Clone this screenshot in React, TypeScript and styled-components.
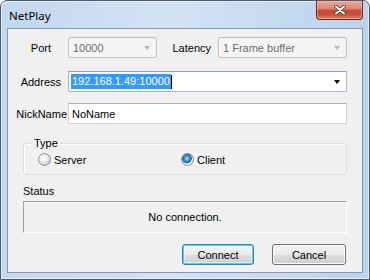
import React from 'react';
import styled, { createGlobalStyle } from 'styled-components';

const GlobalStyle = createGlobalStyle`
  html, body {
    margin: 0;
    padding: 0;
    background: #ffffff;
  }
  * {
    box-sizing: border-box;
  }
`;

const NetPlayDialog: React.FC = () => {
  return (
    <>
      <GlobalStyle />
      <Window>
        <TitleBar>
          <TitleText>NetPlay</TitleText>
          <CloseButton aria-label="Close">
            <svg width="12" height="10" viewBox="0 0 12 10">
              <path d="M2 1.5 L10 8.5 M10 1.5 L2 8.5" stroke="#5a2a22" strokeWidth="3.6" strokeLinecap="round" />
              <path d="M2 1.5 L10 8.5 M10 1.5 L2 8.5" stroke="#ffffff" strokeWidth="2" strokeLinecap="round" />
            </svg>
          </CloseButton>
        </TitleBar>
        <Client>
          <Row>
            <Label pr={17}>Port</Label>
            <Combo disabled w={89}>
              <ComboText disabled>10000</ComboText>
              <Arrow disabled />
            </Combo>
            <Label w={61} pr={7}>Latency</Label>
            <Combo disabled>
              <ComboText disabled>1 Frame buffer</ComboText>
              <Arrow disabled />
            </Combo>
          </Row>
          <Row top={13}>
            <Label pr={7}>Address</Label>
            <Combo>
              <ComboText>
                <Selected>192.168.1.49:10000</Selected>
                <Caret />
              </ComboText>
              <Arrow />
            </Combo>
          </Row>
          <Row top={11}>
            <Label pr={1}>NickName</Label>
            <Edit>NoName</Edit>
          </Row>
          <GroupBox>
            <GroupTitle>Type</GroupTitle>
            <RadioOption w={143}>
              <RadioCircle />
              Server
            </RadioOption>
            <RadioOption>
              <RadioCircle checked />
              Client
            </RadioOption>
          </GroupBox>
          <StatusLabel>Status</StatusLabel>
          <StatusBox>No connection.</StatusBox>
          <ButtonRow>
            <Button primary w={72}>Connect</Button>
            <Button w={74}>Cancel</Button>
          </ButtonRow>
        </Client>
      </Window>
    </>
  );
};

const Window = styled.div`
  width: 370px;
  height: 280px;
  display: flex;
  flex-direction: column;
  padding: 0 6px 6px 6px;
  border: 1px solid #4a5a70;
  border-radius: 7px 7px 0 0;
  background: linear-gradient(90deg, #c3d7ee 0%, #d3e3f4 45%, #bcd3ec 100%);
  box-shadow: inset 1px 1px 0 #e6f0fa, inset -1px -1px 0 #e6f0fa;
`;

const TitleBar = styled.div`
  height: 27px;
  display: flex;
  align-items: flex-start;
  flex-shrink: 0;
`;

const TitleText = styled.div`
  padding: 7px 0 0 2px;
  font-family: "Noto Sans", "Liberation Sans", sans-serif;
  font-size: 11.5px;
  color: #000;
`;

const CloseButton = styled.div`
  margin-left: auto;
  width: 47px;
  height: 19px;
  display: flex;
  align-items: center;
  justify-content: center;
  border: 1px solid #6b2a20;
  border-top: none;
  border-radius: 0 0 4px 4px;
  background: linear-gradient(180deg, #e9a99a 0%, #dc8a78 40%, #c4462f 55%, #c9553e 80%, #dc8a74 100%);
  box-shadow: inset 0 0 0 1px rgba(255, 210, 200, 0.45);
`;

const Client = styled.div`
  flex: 1;
  display: flex;
  flex-direction: column;
  padding: 8px 15px 0 0;
  background: #f0f0f0;
  border: 1px solid #8398b4;
  font-family: "Liberation Sans", Arial, sans-serif;
  font-size: 11px;
  color: #000;
`;

const Row = styled.div<{ top?: number }>`
  display: flex;
  align-items: center;
  height: 21px;
  margin-top: ${p => p.top ?? 0}px;
`;

const Label = styled.div<{ w?: number; pr: number }>`
  width: ${p => p.w ?? 60}px;
  flex-shrink: 0;
  text-align: right;
  padding-right: ${p => p.pr}px;
  white-space: nowrap;
`;

const Combo = styled.div<{ w?: number; disabled?: boolean }>`
  ${p => (p.w ? `width: ${p.w}px; flex-shrink: 0;` : 'flex: 1;')}
  height: 21px;
  display: flex;
  align-items: center;
  padding: 0 2px 0 2px;
  border: 1px solid ${p => (p.disabled ? '#c4c4c4' : '#a9b9cc')};
  border-top-color: ${p => (p.disabled ? '#bababa' : '#8f9fb3')};
  border-radius: ${p => (p.disabled ? '3px' : '1px')};
  background: ${p => (p.disabled ? '#f4f4f4' : '#ffffff')};
`;

const ComboText = styled.div<{ disabled?: boolean }>`
  flex: 1;
  display: flex;
  align-items: center;
  height: 15px;
  padding-left: ${p => (p.disabled ? 2 : 0)}px;
  color: ${p => (p.disabled ? '#6d6d6d' : '#000')};
  white-space: nowrap;
`;

const Selected = styled.span`
  background: #3399ff;
  color: #fff;
  line-height: 15px;
  padding: 0 1px;
`;

const Caret = styled.span`
  width: 1px;
  height: 14px;
  background: #000;
`;

const Arrow = styled.div<{ disabled?: boolean }>`
  width: 0;
  height: 0;
  margin: 1px 4px 0 0;
  border-left: 3.5px solid transparent;
  border-right: 3.5px solid transparent;
  border-top: 4px solid ${p => (p.disabled ? '#b8b8b8' : '#000')};
`;

const Edit = styled.div`
  flex: 1;
  height: 21px;
  display: flex;
  align-items: center;
  padding-left: 3px;
  background: #fff;
  border: 1px solid #c8d3e0;
  border-top-color: #abadb3;
`;

const GroupBox = styled.div`
  position: relative;
  margin: 19px 0 0 15px;
  height: 32px;
  display: flex;
  align-items: center;
  padding: 1px 0 0 14px;
  border: 1px solid #d5dfe5;
  border-radius: 3px;
  box-shadow: inset 1px 1px 0 #fff;
`;

const GroupTitle = styled.div`
  position: absolute;
  top: -7px;
  left: 8px;
  padding: 0 2px;
  background: #f0f0f0;
  line-height: 13px;
`;

const RadioOption = styled.div<{ w?: number }>`
  display: flex;
  align-items: center;
  gap: 3px;
  ${p => (p.w ? `width: ${p.w}px;` : '')}
`;

const RadioCircle = styled.span<{ checked?: boolean }>`
  width: 13px;
  height: 13px;
  border-radius: 50%;
  border: 1px solid #8e8f8f;
  background: ${p =>
    p.checked
      ? 'radial-gradient(circle at 45% 40%, #bfe4ff 0%, #3f9ad6 28%, #1c5a8a 50%, #dfe3e8 56%, #f6f6f6 100%)'
      : 'radial-gradient(circle at 40% 35%, #ffffff 0%, #e8e8e8 45%, #c8c8c8 75%, #e9e9e9 100%)'};
`;

const StatusLabel = styled.div`
  margin: 9px 0 0 15px;
  line-height: 14px;
`;

const StatusBox = styled.div`
  margin: 3px 0 0 15px;
  height: 32px;
  display: flex;
  align-items: center;
  justify-content: center;
  border: 1px solid #a0a0a0;
  border-right-color: #ffffff;
  border-bottom-color: #ffffff;
`;

const ButtonRow = styled.div`
  display: flex;
  justify-content: flex-end;
  gap: 18px;
  margin-top: 11px;
  padding-right: 1px;
`;

const Button = styled.div<{ primary?: boolean; w: number }>`
  width: ${p => p.w}px;
  height: 21px;
  display: flex;
  align-items: center;
  justify-content: center;
  border: 1px solid ${p => (p.primary ? '#3c7fb1' : '#707070')};
  border-radius: 3px;
  background: linear-gradient(180deg, #f2f2f2 0%, #ebebeb 50%, #dddddd 51%, #cfcfcf 100%);
  box-shadow: ${p =>
    p.primary ? 'inset 0 0 0 1px #48d2fb, inset 0 0 0 2px rgba(255,255,255,0.5)' : 'inset 0 0 0 1px #fcfcfc'};
`;

export default NetPlayDialog;
